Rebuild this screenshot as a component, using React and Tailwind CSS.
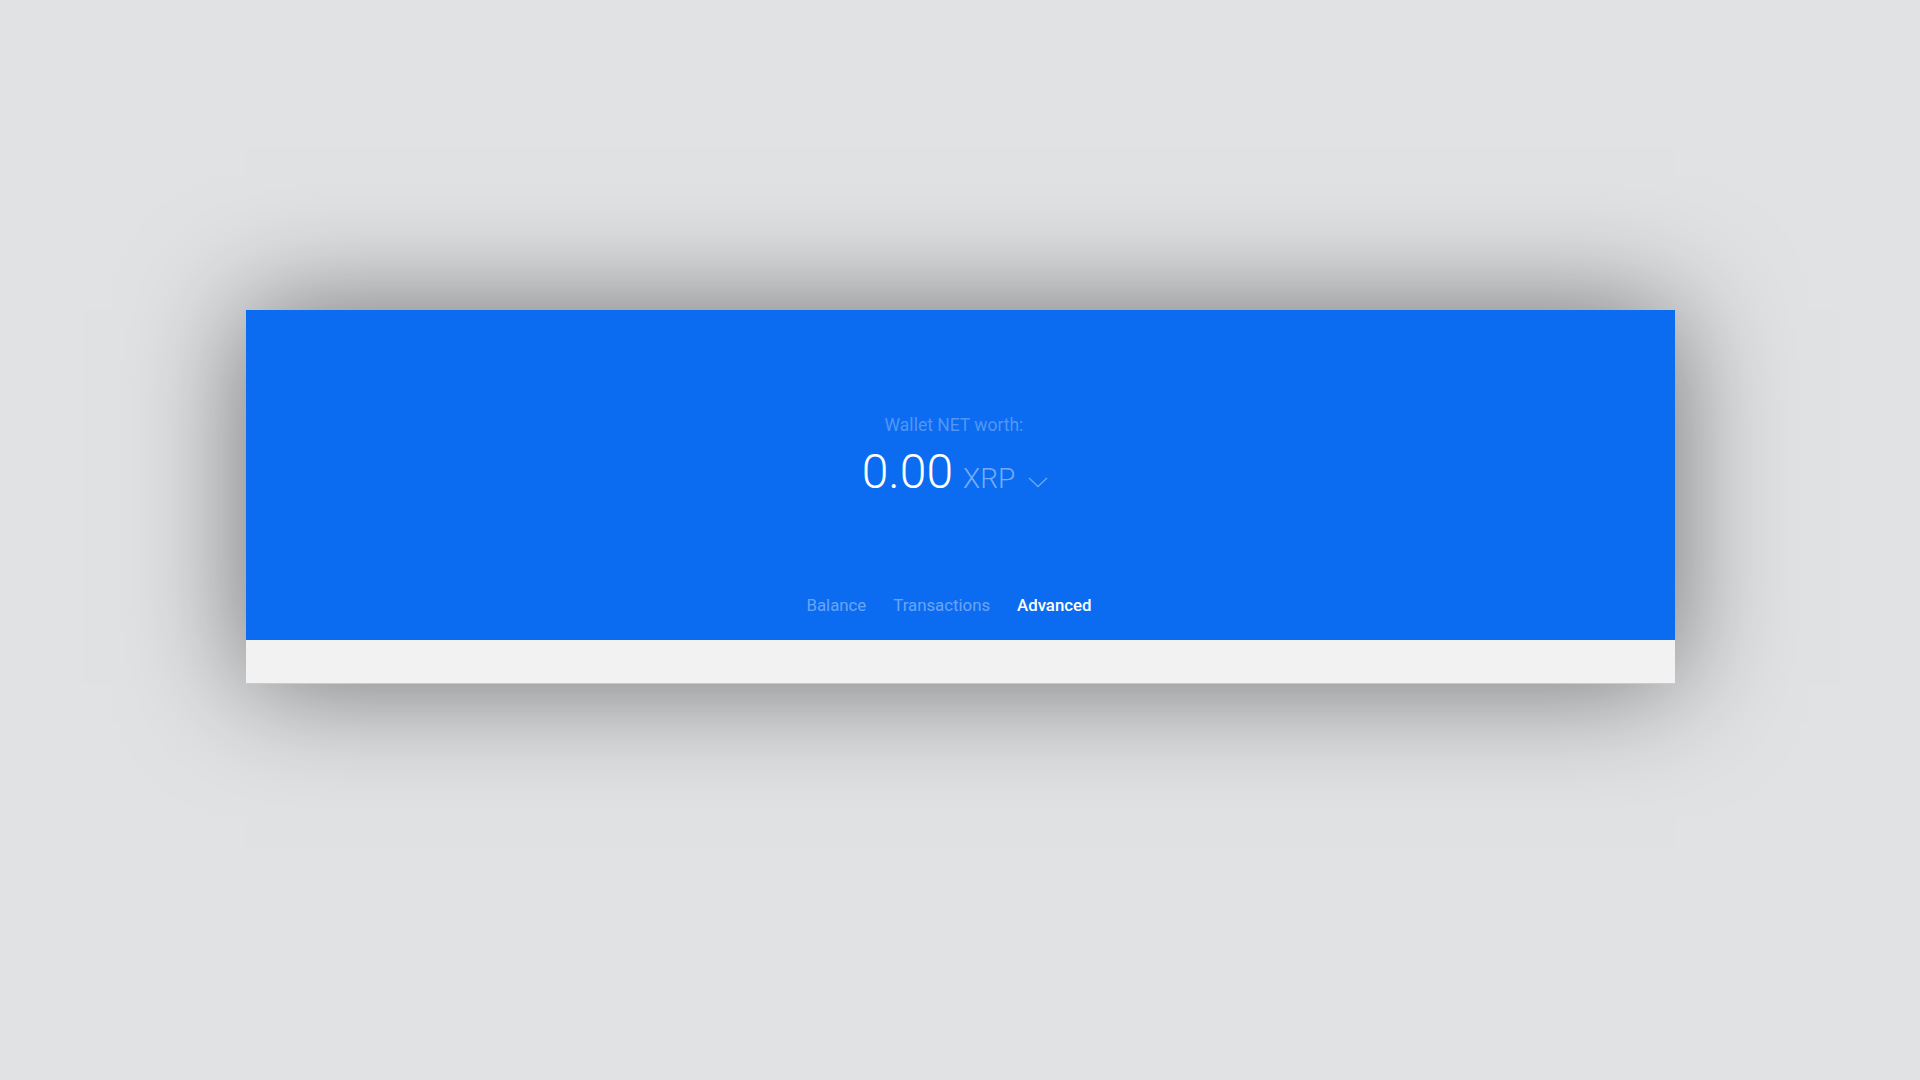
export default function App() {
  return (
    <div className="min-h-screen w-full bg-[#e1e2e4] pt-[310px]" style={{ fontFamily: "Roboto, 'Liberation Sans', sans-serif" }}>
      <div className="mx-auto w-[1429px] shadow-[0_0_110px_rgba(0,0,0,0.5)]">
        <div className="flex h-[330px] flex-col items-center bg-[#0b6cf1] pt-[102px] pb-[23px]">
          <div className="pr-[12px] text-[17.5px] leading-[26px] text-white/30">Wallet NET worth:</div>
          <div className="mt-[10px] flex items-baseline pr-[10px]">
            <span className="text-[48px] font-light leading-[48px] text-white">0.00</span>
            <span className="ml-[10px] text-[28px] font-light leading-[28px] text-white/45">XRP</span>
            <svg className="ml-[13px] mb-[3px]" width="20" height="11" viewBox="0 0 20 11" fill="none">
              <polyline points="1,1 10,9.5 19,1" stroke="rgba(255,255,255,0.4)" strokeWidth="1.3" />
            </svg>
          </div>
          <div className="mt-auto flex items-center gap-[27px] pr-[22px] text-[16.8px] leading-[24px]">
            <span className="text-white/40">Balance</span>
            <span className="text-white/40">Transactions</span>
            <span className="font-medium text-white">Advanced</span>
          </div>
        </div>
        <div className="h-[44px] border-b border-[#c9c9c9] bg-[#f2f2f2]" />
      </div>
    </div>
  );
}
